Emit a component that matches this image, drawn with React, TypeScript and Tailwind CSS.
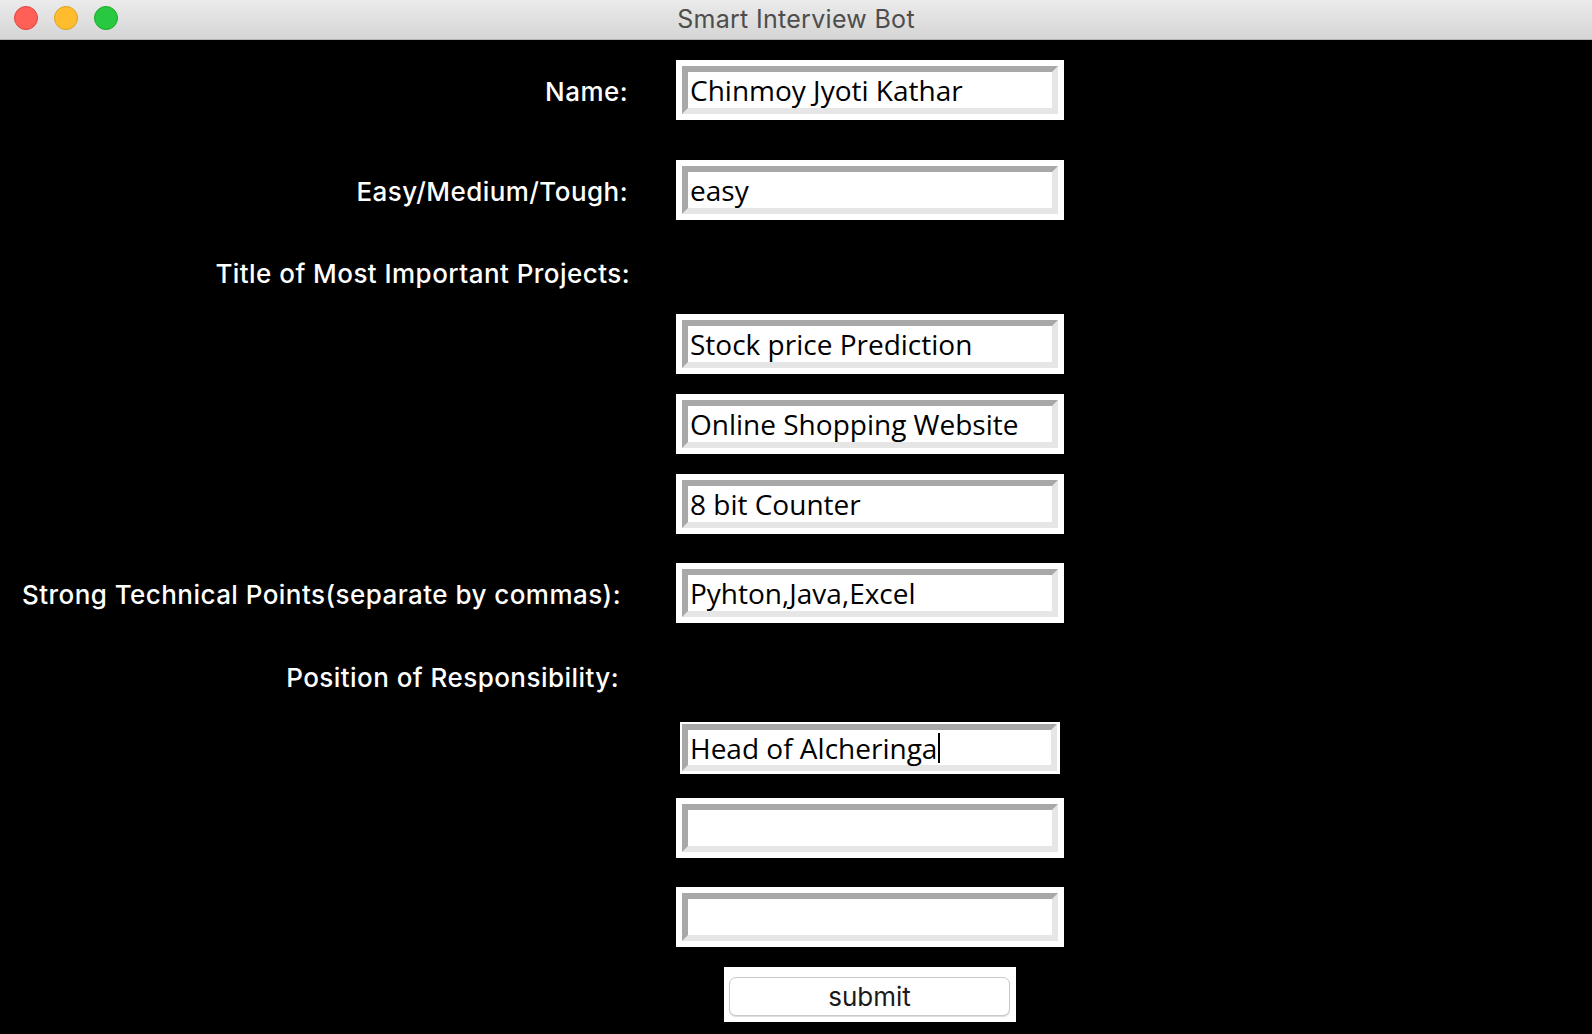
import React from "react";

const labelFont = { fontFamily: "Inter, 'Noto Sans', sans-serif" };
const entryFont = { fontFamily: "'Open Sans', 'DejaVu Sans', sans-serif" };

function Entry({ value, focused = false, caret = false }: { value: string; focused?: boolean; caret?: boolean }) {
  return (
    <div
      className={
        focused
          ? "bg-white w-[380px] h-[52px] ml-[4px] pt-[2px] pl-[2px] pr-[3px] pb-[3px]"
          : "bg-white w-[388px] h-[60px] p-[6px]"
      }
    >
      <div className="h-full w-full border-[6px] border-t-[#a8a8a8] border-l-[#a8a8a8] border-b-[#e6e6e6] border-r-[#e6e6e6] bg-white flex items-center pl-[2px]">
        <span className="text-[28px] text-black leading-none whitespace-pre flex items-center" style={entryFont}>
          {value}
          {caret && <span className="inline-block w-[2px] h-[30px] bg-black ml-[1px]" />}
        </span>
      </div>
    </div>
  );
}

function Row({
  label,
  pr = 48,
  children,
  className = "",
  h = "h-[60px]",
}: {
  label?: string;
  pr?: number;
  children?: React.ReactNode;
  className?: string;
  h?: string;
}) {
  const prClass =
    pr === 48 ? "pr-[48px]" : pr === 46 ? "pr-[46px]" : pr === 55 ? "pr-[55px]" : pr === 57 ? "pr-[57px]" : "pr-[48px]";
  return (
    <div className={`grid grid-cols-[676px_1fr] items-center ${h} ${className}`}>
      <div className={`flex justify-end pt-[3px] ${prClass}`}>
        {label && (
          <span
            className="text-white text-[26px] tracking-[0.45px] font-medium leading-none whitespace-pre"
            style={labelFont}
          >
            {label}
          </span>
        )}
      </div>
      <div className="flex items-center">{children}</div>
    </div>
  );
}

export default function App() {
  return (
    <div className="w-[1592px] h-[1034px] bg-black overflow-hidden flex flex-col">
      {/* Title bar */}
      <div className="relative h-[40px] shrink-0 bg-gradient-to-b from-[#ebebeb] to-[#d5d5d5] border-b border-[#b4b4b4] flex items-center justify-center">
        <div className="absolute left-[14px] top-[6px] flex gap-[16px]">
          <div className="w-[24px] h-[24px] rounded-full bg-[#fe5f57] border border-[#e0443e]" />
          <div className="w-[24px] h-[24px] rounded-full bg-[#febc2e] border border-[#dea123]" />
          <div className="w-[24px] h-[24px] rounded-full bg-[#28c840] border border-[#1aab29]" />
        </div>
        <span className="text-[25px] tracking-[0.3px] text-[#4d4d4d] leading-none" style={labelFont}>
          Smart Interview Bot
        </span>
      </div>

      <Row label="Name:" className="mt-[20px]">
        <Entry value="Chinmoy Jyoti Kathar" />
      </Row>
      <Row label="Easy/Medium/Tough:" className="mt-[40px]">
        <Entry value="easy" />
      </Row>
      <Row label="Title of Most Important Projects:" pr={46} className="mt-[32px]" h="h-[40px]" />
      <Row className="mt-[22px]">
        <Entry value="Stock price Prediction" />
      </Row>
      <Row className="mt-[20px]">
        <Entry value="Online Shopping Website" />
      </Row>
      <Row className="mt-[20px]">
        <Entry value="8 bit Counter" />
      </Row>
      <Row label="Strong Technical Points(separate by commas):" pr={55} className="mt-[29px]">
        <Entry value="Pyhton,Java,Excel" />
      </Row>
      <Row label="Position of Responsibility:" pr={57} className="mt-[33px]" h="h-[40px]" />
      <Row className="mt-[26px]" h="h-[52px]">
        <Entry value="Head of Alcheringa" focused caret />
      </Row>
      <Row className="mt-[24px]">
        <Entry value="" />
      </Row>
      <Row className="mt-[29px]">
        <Entry value="" />
      </Row>
      <Row className="mt-[20px]" h="h-[55px]">
        <div className="ml-[48px] w-[292px] h-[55px] bg-white pl-[5px] pr-[6px] pt-[10px] pb-[6px]">
          <div className="h-full w-full rounded-[7px] border border-[#c9c9c9] bg-white shadow-[0_1px_1px_rgba(0,0,0,0.15)] flex items-center justify-center">
            <span className="text-[26px] text-[#1a1a1a] leading-none" style={labelFont}>
              submit
            </span>
          </div>
        </div>
      </Row>
    </div>
  );
}
